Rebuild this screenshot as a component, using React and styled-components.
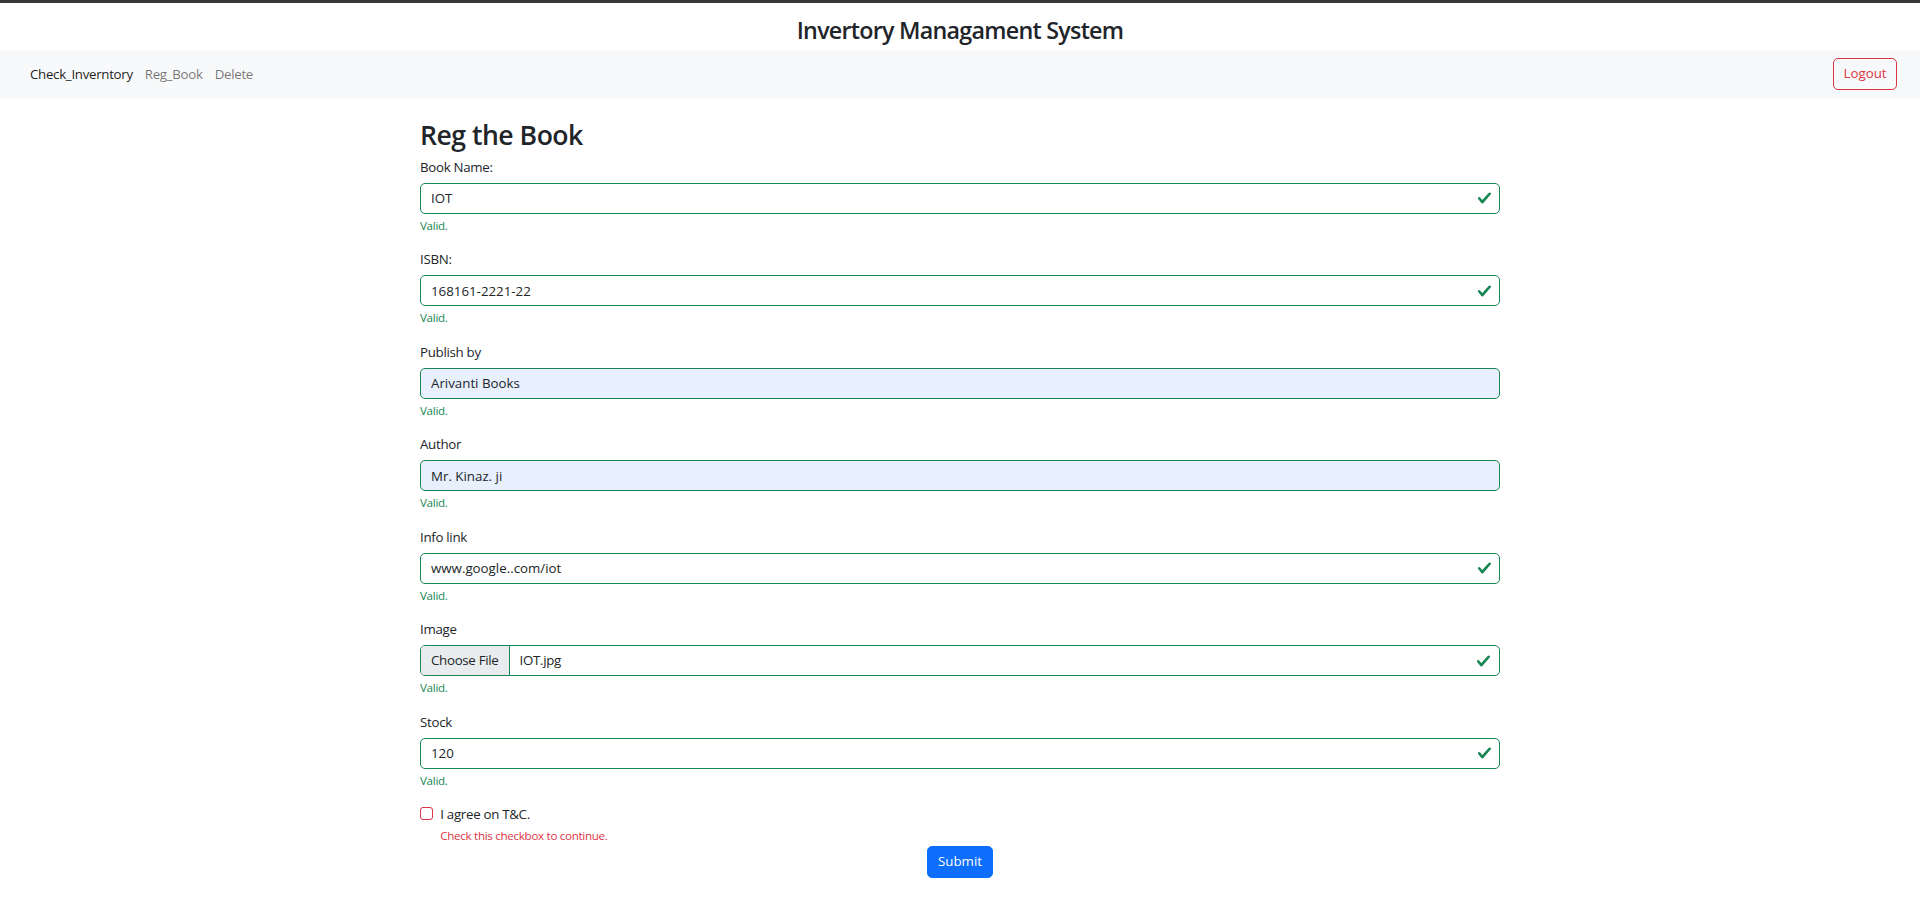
import React from 'react';
import styled, { createGlobalStyle } from 'styled-components';

const GlobalStyle = createGlobalStyle`
  * { box-sizing: border-box; }
  body {
    margin: 0;
    font-family: "Open Sans", "Noto Sans", sans-serif;
    font-size: 13.3px;
    line-height: 1.5;
    letter-spacing: -0.3px;
    color: #212529;
    background: #fff;
  }
`;

const fields = [
  { label: 'Book Name:', value: 'IOT' },
  { label: 'ISBN:', value: '168161-2221-22' },
  { label: 'Publish by', value: 'Arivanti Books', autofill: true },
  { label: 'Author', value: 'Mr. Kinaz. ji', autofill: true },
  { label: 'Info link', value: 'www.google..com/iot' },
  { label: 'Image', value: 'IOT.jpg', file: true },
  { label: 'Stock', value: '120' },
];

const CheckIcon = () => (
  <svg width="15" height="15" viewBox="0 0 8 8">
    <path fill="#198754" d="M2.3 6.73.6 4.53c-.4-1.04.46-1.4 1.1-.8l1.1 1.4 3.4-3.8c.6-.63 1.6-.27 1.2.7l-4 4.6c-.43.5-.8.4-1.1.1z" />
  </svg>
);

const App = () => (
  <Page>
    <GlobalStyle />
    <Header>
      <SiteTitle>Invertory Managament System</SiteTitle>
    </Header>
    <Navbar>
      <NavLinks>
        <NavLink $active>Check_Inverntory</NavLink>
        <NavLink>Reg_Book</NavLink>
        <NavLink>Delete</NavLink>
      </NavLinks>
      <LogoutButton type="button">Logout</LogoutButton>
    </Navbar>
    <Main>
      <FormTitle>Reg the Book</FormTitle>
      <form onSubmit={(e) => e.preventDefault()}>
        {fields.map((f) => (
          <Field key={f.label}>
            <Label>{f.label}</Label>
            {f.file ? (
              <FileBox>
                <FileButton>Choose File</FileButton>
                <FileName>{f.value}</FileName>
                <IconSlot><CheckIcon /></IconSlot>
              </FileBox>
            ) : (
              <InputWrap>
                <Input readOnly defaultValue={f.value} $autofill={f.autofill} />
                {!f.autofill && <IconSlot><CheckIcon /></IconSlot>}
              </InputWrap>
            )}
            <Feedback>Valid.</Feedback>
          </Field>
        ))}
        <CheckRow>
          <Checkbox type="checkbox" />
          <div>
            <CheckLabel>I agree on T&amp;C.</CheckLabel>
            <Feedback $invalid>Check this checkbox to continue.</Feedback>
          </div>
        </CheckRow>
        <SubmitRow>
          <SubmitButton type="submit">Submit</SubmitButton>
        </SubmitRow>
      </form>
    </Main>
  </Page>
);

const Page = styled.div`
  border-top: 3px solid #373737;
  min-height: 913px;
`;

const Header = styled.header`
  height: 47px;
  padding-top: 8px;
  display: flex;
  align-items: center;
  justify-content: center;
`;

const SiteTitle = styled.h3`
  margin: 0;
  font-size: 23.3px;
  font-weight: 600;
  line-height: 1.2;
  letter-spacing: -0.75px;
`;

const Navbar = styled.nav`
  height: 48px;
  padding: 2px 23px 0 24px;
  background: #f8f9fa;
  display: flex;
  align-items: center;
  justify-content: space-between;
`;

const NavLinks = styled.div`
  display: flex;
`;

const NavLink = styled.a`
  padding: 0 6px;
  color: ${(p) => (p.$active ? 'rgba(0,0,0,.9)' : 'rgba(0,0,0,.55)')};
  cursor: pointer;
`;

const LogoutButton = styled.button`
  height: 32px;
  width: 64px;
  margin-top: -2px;
  font: inherit;
  color: #dc3545;
  background: transparent;
  border: 1px solid #dc3545;
  border-radius: 5px;
  cursor: pointer;
`;

const Main = styled.main`
  width: 1080px;
  margin: 22px auto 0;
`;

const FormTitle = styled.h2`
  margin: 0 0 4.65px;
  font-size: 26.6px;
  font-weight: 600;
  line-height: 1.2;
  letter-spacing: -0.5px;
`;

const Field = styled.div`
  margin-bottom: 15.5px;
`;

const Label = styled.label`
  display: block;
  line-height: 20px;
  margin-bottom: 6px;
`;

const InputWrap = styled.div`
  position: relative;
`;

const Input = styled.input`
  display: block;
  width: 100%;
  height: 31px;
  padding: 0 32px 0 10px;
  font: inherit;
  color: #212529;
  background: ${(p) => (p.$autofill ? '#e8f0fe' : '#fff')};
  border: 1px solid #198754;
  border-radius: 5px;
  outline: none;
`;

const IconSlot = styled.span`
  position: absolute;
  right: 8px;
  top: 50%;
  transform: translateY(-50%);
  display: flex;
`;

const FileBox = styled.div`
  position: relative;
  display: flex;
  height: 31px;
  border: 1px solid #198754;
  border-radius: 5px;
  overflow: hidden;
`;

const FileButton = styled.span`
  display: flex;
  align-items: center;
  padding: 0 10px;
  background: #e9ecef;
  border-right: 1px solid #198754;
`;

const FileName = styled.span`
  display: flex;
  align-items: center;
  padding: 0 10px;
`;

const Feedback = styled.div`
  margin-top: 3px;
  font-size: 11.6px;
  line-height: 17px;
  color: ${(p) => (p.$invalid ? '#dc3545' : '#198754')};
`;

const CheckRow = styled.div`
  display: flex;
  gap: 7px;
  margin-bottom: 1.7px;
`;

const Checkbox = styled.input`
  appearance: none;
  width: 13.3px;
  height: 13.3px;
  margin: 3px 0 0;
  border: 1px solid #dc3545;
  border-radius: 3px;
  background: #fff;
`;

const CheckLabel = styled.label`
  display: block;
  line-height: 20px;
`;

const SubmitRow = styled.div`
  display: flex;
  justify-content: center;
`;

const SubmitButton = styled.button`
  height: 32px;
  padding: 0 10px;
  font: inherit;
  color: #fff;
  background: #0d6efd;
  border: 1px solid #0d6efd;
  border-radius: 5px;
  cursor: pointer;
`;

export default App;
